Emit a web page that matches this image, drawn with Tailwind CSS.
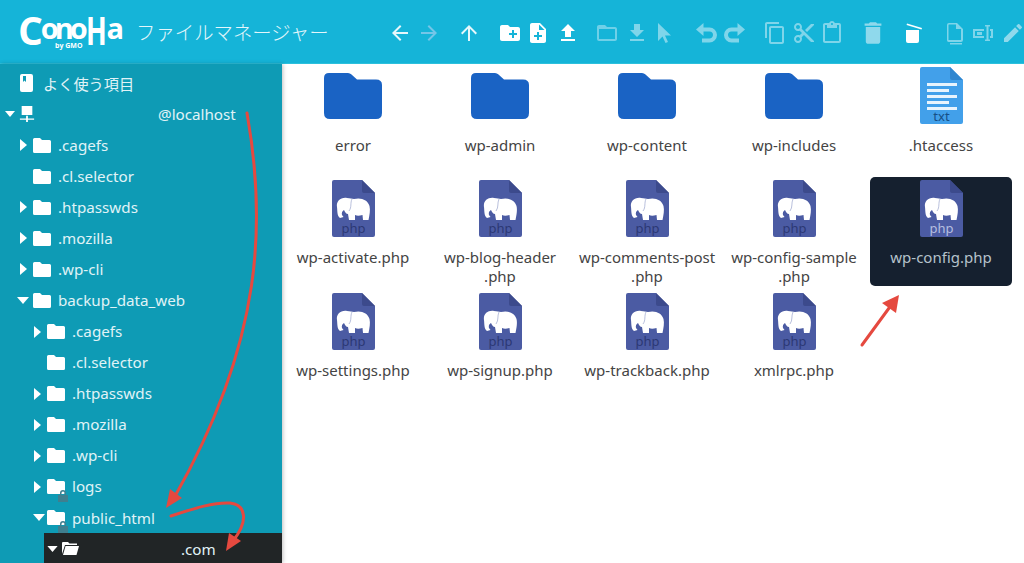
<!DOCTYPE html>
<html lang="ja">
<head>
  <meta charset="utf-8" />
  <title>ファイルマネージャー</title>
  <script src="https://cdn.jsdelivr.net/npm/@tailwindcss/browser@4"></script>
</head>
<body class="h-screen overflow-hidden bg-white font-['Noto_Sans','Noto_Sans_CJK_JP',sans-serif] text-[15px]">

  <!-- defs shared by the icons -->
  <svg class="hidden">
    <symbol id="folder" viewBox="0 0 18 15"><path d="M1.500 0H7l2 2h7.500A1.500 1.500 0 0 1 18 3.500V13.500A1.500 1.500 0 0 1 16.500 15H1.500A1.500 1.500 0 0 1 0 13.500V1.500A1.500 1.500 0 0 1 1.500 0z" fill="currentColor"/></symbol>
    <symbol id="right" viewBox="0 0 7 12"><path d="M0 0l7 6-7 6z" fill="currentColor"/></symbol>
    <symbol id="down" viewBox="0 0 12 7"><path d="M0 0h12L6 7z" fill="currentColor"/></symbol>
    <symbol id="bigfolder" viewBox="0 0 58 46"><path d="M5 0H24Q26 0 27.500 1.500L33 6.500H52Q58 6.500 58 12V40Q58 46 52 46H6Q0 46 0 40V5Q0 0 5 0z" fill="#1a63c4"/></symbol>
    <symbol id="elephant" viewBox="0 0 43 57">
      <path d="M5 27C4 21 9 17 15 18C18 18 20 19 22 19C29 17 36 20 37.500 26C38.500 30 37.500 35 36.500 40L31 40L30.500 35C27 36 25 36 23 35L23 40L17 40L16 34C14 34 13 32 12 30C10 31 9.500 33 10 35L11.500 37L8 38C5 36 5.500 31 5 27z" fill="#fff"/>
      <path d="M20 19C18 23 20 27 17 31" fill="none" stroke="#8a95c4" stroke-width=".6"/>
    </symbol>
  </svg>

  <header class="h-16 bg-[#15b4d8] border-b border-[#2cc0dc] flex items-center text-white">
    <div class="w-[136px] h-full shrink-0 relative font-['Open_Sans',sans-serif] font-bold leading-none">
      <div class="absolute left-[18px] top-[10px] flex items-start">
        <span class="text-[39px]">C</span>
        <span class="text-[29px] leading-[26px] tracking-[-4px] ml-[-2px] mt-[5px]">ono</span>
        <span class="text-[40px] ml-[2px] mr-[-10px] scale-x-[.68] origin-left">H</span>
        <span class="text-[29px] leading-[26px] mt-[5px]">a</span>
      </div>
      <span class="absolute left-[55px] top-[42px] text-[7px] font-bold leading-[7px]">by GMO</span>
    </div>
    <span class="w-[194px] shrink-0 whitespace-nowrap text-[19.400px] font-light font-['Noto_Sans_CJK_JP',sans-serif] text-[#e3f6fb] leading-none mt-[1px]">ファイルマネージャー</span>

    <div class="flex items-center shrink-0 ml-[58px] mt-[2px]">
      <svg class="w-6 h-6 fill-[#e6f7fb]" viewBox="0 0 24 24"><path d="M20 11H7.830l5.590-5.590L12 4l-8 8 8 8 1.410-1.410L7.830 13H20v-2z"/></svg>
      <svg class="w-6 h-6 ml-[5px] fill-[#74c6e8]" viewBox="0 0 24 24"><path d="M12 4l-1.410 1.410L16.170 11H4v2h12.170l-5.580 5.590L12 20l8-8z"/></svg>
      <svg class="w-6 h-6 ml-[16px] fill-[#e6f7fb]" viewBox="0 0 24 24"><path d="M4 12l1.410 1.410L11 7.830V20h2V7.830l5.580 5.590L20 12l-8-8-8 8z"/></svg>
      <svg class="w-6 h-6 ml-[17px] fill-white" viewBox="0 0 24 24"><path d="M20 6h-8l-2-2H4c-1.110 0-1.990.890-1.990 2L2 18c0 1.110.890 2 2 2h16c1.110 0 2-.890 2-2V8c0-1.110-.890-2-2-2zm-1 8h-3v3h-2v-3h-3v-2h3V9h2v3h3v2z"/></svg>
      <svg class="w-6 h-6 ml-[4px] fill-white" viewBox="0 0 24 24"><path d="M14 2H6c-1.100 0-1.990.900-1.990 2L4 20c0 1.100.890 2 1.990 2H18c1.100 0 2-.900 2-2V8l-6-6zm2 14h-3v3h-2v-3H8v-2h3v-3h2v3h3v2zm-3-7V3.500L18.500 9H13z"/></svg>
      <svg class="w-6 h-6 ml-[6px] fill-white" viewBox="0 0 24 24"><path d="M9 16h6v-6h4l-7-7-7 7h4zm-4 2h14v2H5z"/></svg>
      <svg class="w-6 h-6 ml-[15px] fill-[#6fd0e8]" viewBox="0 0 24 24"><path d="M20 6h-8l-2-2H4c-1.100 0-1.990.900-1.990 2L2 18c0 1.100.900 2 2 2h16c1.100 0 2-.900 2-2V8c0-1.100-.900-2-2-2zm0 12H4V8h16v10z"/></svg>
      <svg class="w-6 h-6 ml-[6px] fill-[#7fd5ea]" viewBox="0 0 24 24"><path d="M19 9h-4V3H9v6H5l7 7 7-7zM5 18v2h14v-2H5z"/></svg>
      <svg class="w-6 h-6 ml-[2px] fill-[#7fd5ea]" viewBox="0 0 24 24"><path d="M7 2v18l4.500-4.500 3 6.500 2.500-1-3-6.500h6z"/></svg>
      <svg class="w-6 h-6 ml-[19px] fill-[#7fd5ea]" viewBox="0 0 24 24"><path d="M6 8.500h9.500a5.500 5.500 0 0 1 0 11H8" fill="none" stroke="#7fd5ea" stroke-width="4"/><path d="M9.500 2L2 8.500l7.500 6.500z"/></svg>
      <svg class="w-6 h-6 ml-[5px] fill-[#7fd5ea]" viewBox="0 0 24 24"><path d="M18 8.500H8.500a5.500 5.500 0 0 0 0 11H16" fill="none" stroke="#7fd5ea" stroke-width="4"/><path d="M14.500 2L22 8.500 14.500 15z"/></svg>
      <svg class="w-6 h-6 ml-[16px] fill-[#7fd5ea]" viewBox="0 0 24 24"><path d="M16 1H4c-1.100 0-2 .900-2 2v14h2V3h12V1zm3 4H8c-1.100 0-2 .900-2 2v14c0 1.100.900 2 2 2h11c1.100 0 2-.900 2-2V7c0-1.100-.900-2-2-2zm0 16H8V7h11v14z"/></svg>
      <svg class="w-6 h-6 ml-[5px] fill-[#7fd5ea]" viewBox="0 0 24 24"><path d="M9.640 7.640c.230-.500.360-1.050.360-1.640 0-2.210-1.790-4-4-4S2 3.790 2 6s1.790 4 4 4c.590 0 1.140-.130 1.640-.360L10 12l-2.360 2.360C7.140 14.130 6.590 14 6 14c-2.210 0-4 1.790-4 4s1.790 4 4 4 4-1.790 4-4c0-.590-.130-1.140-.360-1.640L12 14l7 7h3v-1L9.640 7.640zM6 8c-1.100 0-2-.890-2-2s.900-2 2-2 2 .890 2 2-.900 2-2 2zm0 12c-1.100 0-2-.890-2-2s.900-2 2-2 2 .890 2 2-.900 2-2 2zM19 3l-6 6 2 2 7-7V3z"/></svg>
      <svg class="w-6 h-6 ml-[4px] fill-[#7fd5ea]" viewBox="0 0 24 24"><path d="M19 2h-4.180C14.400.840 13.300 0 12 0c-1.300 0-2.400.840-2.820 2H5c-1.100 0-2 .900-2 2v16c0 1.100.900 2 2 2h14c1.100 0 2-.900 2-2V4c0-1.100-.900-2-2-2zm-7 0c.550 0 1 .450 1 1s-.450 1-1 1-1-.450-1-1 .450-1 1-1zm7 18H5V4h2v3h10V4h2v16z"/></svg>
      <svg class="w-6 h-6 ml-[17px] fill-[#8fd9ec]" viewBox="2 2 20 20"><path d="M6 19c0 1.100.900 2 2 2h8c1.100 0 2-.900 2-2V7H6v12zM19 4h-3.500l-1-1h-5l-1 1H5v2h14V4z"/></svg>
      <svg class="w-6 h-6 ml-[16px] fill-white" viewBox="0 0 24 24"><path d="M5 9h13v11a2 2 0 0 1-2 2H7a2 2 0 0 1-2-2V12z"/><path d="M6 2.500l15 4.500-.5 1.500L5.600 4z"/></svg>
      <svg class="w-6 h-6 ml-[18px] fill-[#7fd5ea]" viewBox="0 0 24 24"><path d="M14 2H6a2 2 0 0 0-2 2v15h1.500V4A.5.500 0 0 1 6 3.500h7V8h5v10.500A.5.500 0 0 1 17.500 19H4v.5A2 2 0 0 0 6 21h12a2 2 0 0 0 2-2V8z"/><path d="M7 22h12v1.500H7z"/></svg>
      <svg class="w-6 h-6 ml-[4px] fill-[#7fd5ea]" viewBox="0 0 24 24"><path d="M2 8h11v2H4v5h9v2H2zM19 8h3v9h-3v-2h1v-5h-1zM14 4h5v1.500h-1.500v13H19V20h-5v-1.500h1.500v-13H14z"/><path d="M6 11h5v3H6z"/></svg>
      <svg class="w-6 h-6 ml-[6px] fill-[#8fd9ec]" viewBox="0 0 24 24"><path d="M3 17.250V21h3.750L17.810 9.940l-3.750-3.750L3 17.250zM20.710 7.040c.390-.390.390-1.020 0-1.410l-2.340-2.340c-.390-.390-1.020-.390-1.410 0l-1.830 1.830 3.750 3.750 1.830-1.830z"/></svg>
    </div>
  </header>

  <div class="flex h-[499px]">
    <!-- tree -->
    <nav class="w-[282px] shrink-0 bg-[#0e9bb5] text-[#e0f3f7] text-[15.200px] pt-[3.500px] overflow-hidden shadow-[1px_0_4px_rgba(0,0,0,0.25)]">
      <div class="flex items-center h-[31.070px] pl-[20px]">
        <svg class="w-[13px] h-[18px]" viewBox="0 0 13 18"><path d="M2 0h9a2 2 0 0 1 2 2v14a2 2 0 0 1-2 2H2a2 2 0 0 1-2-2V2a2 2 0 0 1 2-2z" fill="#fff"/><path d="M3 2h3v6L4.500 6.500 3 8z" fill="#0e9bb5"/></svg>
        <span class="ml-[10px] font-['Noto_Sans_CJK_JP',sans-serif]">よく使う項目</span>
      </div>
      <div class="flex items-center h-[31.070px] pl-[5px]">
        <svg class="w-[10px] h-[6px] text-white"><use href="#down"/></svg>
        <svg class="w-[16px] h-[16px] ml-[4px] fill-white" viewBox="0 0 18 18"><path d="M3 0h12v10H3zM8 11h2v3h7v1.500H10V18H8v-2.500H1V14h7z"/></svg>
        <span class="ml-[123px]">@localhost</span>
      </div>
      <div class="flex items-center h-[31.070px] pl-[20px]"><svg class="w-[7px] h-3 text-white"><use href="#right"/></svg><svg class="w-[18px] h-[15px] ml-[6px] text-white"><use href="#folder"/></svg><span class="ml-[7px]">.cagefs</span></div>
      <div class="flex items-center h-[31.070px] pl-[33px]"><svg class="w-[18px] h-[15px] text-white"><use href="#folder"/></svg><span class="ml-[7px]">.cl.selector</span></div>
      <div class="flex items-center h-[31.070px] pl-[20px]"><svg class="w-[7px] h-3 text-white"><use href="#right"/></svg><svg class="w-[18px] h-[15px] ml-[6px] text-white"><use href="#folder"/></svg><span class="ml-[7px]">.htpasswds</span></div>
      <div class="flex items-center h-[31.070px] pl-[20px]"><svg class="w-[7px] h-3 text-white"><use href="#right"/></svg><svg class="w-[18px] h-[15px] ml-[6px] text-white"><use href="#folder"/></svg><span class="ml-[7px]">.mozilla</span></div>
      <div class="flex items-center h-[31.070px] pl-[20px]"><svg class="w-[7px] h-3 text-white"><use href="#right"/></svg><svg class="w-[18px] h-[15px] ml-[6px] text-white"><use href="#folder"/></svg><span class="ml-[7px]">.wp-cli</span></div>
      <div class="flex items-center h-[31.070px] pl-[17px]"><svg class="w-3 h-[7px] text-white"><use href="#down"/></svg><svg class="w-[18px] h-[15px] ml-[4px] text-white"><use href="#folder"/></svg><span class="ml-[7px]">backup_data_web</span></div>
      <div class="flex items-center h-[31.070px] pl-[34px]"><svg class="w-[7px] h-3 text-white"><use href="#right"/></svg><svg class="w-[18px] h-[15px] ml-[6px] text-white"><use href="#folder"/></svg><span class="ml-[7px]">.cagefs</span></div>
      <div class="flex items-center h-[31.070px] pl-[47px]"><svg class="w-[18px] h-[15px] text-white"><use href="#folder"/></svg><span class="ml-[7px]">.cl.selector</span></div>
      <div class="flex items-center h-[31.070px] pl-[34px]"><svg class="w-[7px] h-3 text-white"><use href="#right"/></svg><svg class="w-[18px] h-[15px] ml-[6px] text-white"><use href="#folder"/></svg><span class="ml-[7px]">.htpasswds</span></div>
      <div class="flex items-center h-[31.070px] pl-[34px]"><svg class="w-[7px] h-3 text-white"><use href="#right"/></svg><svg class="w-[18px] h-[15px] ml-[6px] text-white"><use href="#folder"/></svg><span class="ml-[7px]">.mozilla</span></div>
      <div class="flex items-center h-[31.070px] pl-[34px]"><svg class="w-[7px] h-3 text-white"><use href="#right"/></svg><svg class="w-[18px] h-[15px] ml-[6px] text-white"><use href="#folder"/></svg><span class="ml-[7px]">.wp-cli</span></div>
      <div class="flex items-center h-[31.070px] pl-[34px]"><svg class="w-[7px] h-3 text-white"><use href="#right"/></svg>
        <span class="relative ml-[6px] flex"><svg class="w-[18px] h-[15px] text-white"><use href="#folder"/></svg>
          <svg class="absolute left-[11px] top-[11px] w-[10px] h-[12px] fill-[#3f7f8f]" viewBox="0 0 10 12"><path d="M2 5V3a3 3 0 0 1 6 0v2h2v7H0V5zM3.500 5h3V3a1.500 1.500 0 0 0-3 0z"/></svg></span>
        <span class="ml-[7px]">logs</span></div>
      <div class="flex items-center h-[31.070px] pl-[33px]"><svg class="w-3 h-[7px] text-white"><use href="#down"/></svg>
        <span class="relative ml-[2px] flex"><svg class="w-[18px] h-[15px] text-white"><use href="#folder"/></svg>
          <svg class="absolute left-[11px] top-[11px] w-[10px] h-[12px] fill-[#3f7f8f]" viewBox="0 0 10 12"><path d="M2 5V3a3 3 0 0 1 6 0v2h2v7H0V5zM3.500 5h3V3a1.500 1.500 0 0 0-3 0z"/></svg></span>
        <span class="ml-[7px]">public_html</span></div>
      <div class="flex items-center h-[31.070px] ml-[44px] pl-[3px] bg-[#212526]">
        <svg class="w-[11px] h-[6px] text-white"><use href="#down"/></svg>
        <svg class="w-[17px] h-[13px] ml-[4px] fill-white" viewBox="0 0 17 13"><path d="M1 0h5l1.500 1.500H15V3H3L0 12V1a1 1 0 0 1 1-1z"/><path d="M3.500 4H17l-2.500 9H1z"/></svg>
        <span class="ml-[102px]">.com</span>
      </div>
    </nav>

    <!-- files -->
    <main class="flex-1 grid grid-cols-[repeat(5,142px)] auto-rows-[109px] gap-x-[5px] gap-y-[4px] content-start text-[#444]">
      <div class="flex flex-col items-center pt-[3px]"><svg class="w-[58px] h-[46px] mt-[6px] mb-[5px]"><use href="#bigfolder"/></svg><p class="mt-[12px] leading-[18.500px] text-center">error</p></div>
      <div class="flex flex-col items-center pt-[3px]"><svg class="w-[58px] h-[46px] mt-[6px] mb-[5px]"><use href="#bigfolder"/></svg><p class="mt-[12px] leading-[18.500px] text-center">wp-admin</p></div>
      <div class="flex flex-col items-center pt-[3px]"><svg class="w-[58px] h-[46px] mt-[6px] mb-[5px]"><use href="#bigfolder"/></svg><p class="mt-[12px] leading-[18.500px] text-center">wp-content</p></div>
      <div class="flex flex-col items-center pt-[3px]"><svg class="w-[58px] h-[46px] mt-[6px] mb-[5px]"><use href="#bigfolder"/></svg><p class="mt-[12px] leading-[18.500px] text-center">wp-includes</p></div>
      <div class="flex flex-col items-center pt-[3px]">
        <svg class="w-[43px] h-[57px]" viewBox="0 0 43 57"><path d="M2 0H30L43 13V55a2 2 0 0 1-2 2H2a2 2 0 0 1-2-2V2a2 2 0 0 1 2-2z" fill="#42a0ea"/><path d="M30 0L43 13H32a2 2 0 0 1-2-2z" fill="#2f86d0"/><path d="M7 16h30v3H7zM7 22h22v3H7zM7 28h30v3H7zM7 34h22v3H7zM7 40h30v3H7z" fill="#e8f4fd"/><text x="21.500" y="54" text-anchor="middle" font-size="13" fill="#174f86">txt</text></svg>
        <p class="mt-[12px] leading-[18.500px] text-center">.htaccess</p>
      </div>

      <div class="flex flex-col items-center pt-[3px]">
        <svg class="w-[43px] h-[57px]" viewBox="0 0 43 57"><path d="M2 0H30L43 13V55a2 2 0 0 1-2 2H2a2 2 0 0 1-2-2V2a2 2 0 0 1 2-2z" fill="#4b5ba3"/><path d="M30 0L43 13H32a2 2 0 0 1-2-2z" fill="#3c4a8c"/><use href="#elephant"/><text x="21.500" y="53" text-anchor="middle" font-size="13" fill="#2c3874">php</text></svg>
        <p class="mt-[11px] leading-[18.500px] text-center">wp-activate.php</p>
      </div>
      <div class="flex flex-col items-center pt-[3px]">
        <svg class="w-[43px] h-[57px]" viewBox="0 0 43 57"><path d="M2 0H30L43 13V55a2 2 0 0 1-2 2H2a2 2 0 0 1-2-2V2a2 2 0 0 1 2-2z" fill="#4b5ba3"/><path d="M30 0L43 13H32a2 2 0 0 1-2-2z" fill="#3c4a8c"/><use href="#elephant"/><text x="21.500" y="53" text-anchor="middle" font-size="13" fill="#2c3874">php</text></svg>
        <p class="mt-[11px] leading-[18.500px] text-center">wp-blog-header<br />.php</p>
      </div>
      <div class="flex flex-col items-center pt-[3px]">
        <svg class="w-[43px] h-[57px]" viewBox="0 0 43 57"><path d="M2 0H30L43 13V55a2 2 0 0 1-2 2H2a2 2 0 0 1-2-2V2a2 2 0 0 1 2-2z" fill="#4b5ba3"/><path d="M30 0L43 13H32a2 2 0 0 1-2-2z" fill="#3c4a8c"/><use href="#elephant"/><text x="21.500" y="53" text-anchor="middle" font-size="13" fill="#2c3874">php</text></svg>
        <p class="mt-[11px] leading-[18.500px] text-center">wp-comments-post<br />.php</p>
      </div>
      <div class="flex flex-col items-center pt-[3px]">
        <svg class="w-[43px] h-[57px]" viewBox="0 0 43 57"><path d="M2 0H30L43 13V55a2 2 0 0 1-2 2H2a2 2 0 0 1-2-2V2a2 2 0 0 1 2-2z" fill="#4b5ba3"/><path d="M30 0L43 13H32a2 2 0 0 1-2-2z" fill="#3c4a8c"/><use href="#elephant"/><text x="21.500" y="53" text-anchor="middle" font-size="13" fill="#2c3874">php</text></svg>
        <p class="mt-[11px] leading-[18.500px] text-center">wp-config-sample<br />.php</p>
      </div>
      <div class="flex flex-col items-center pt-[3px] bg-[#15202f] rounded-[5px] text-[#b5c2cb]">
        <svg class="w-[43px] h-[57px]" viewBox="0 0 43 57"><path d="M2 0H30L43 13V55a2 2 0 0 1-2 2H2a2 2 0 0 1-2-2V2a2 2 0 0 1 2-2z" fill="#4b5ba3"/><path d="M30 0L43 13H32a2 2 0 0 1-2-2z" fill="#3c4a8c"/><use href="#elephant"/><text x="21.500" y="53" text-anchor="middle" font-size="13" fill="#b5bfe0">php</text></svg>
        <p class="mt-[11px] leading-[18.500px] text-center">wp-config.php</p>
      </div>

      <div class="flex flex-col items-center pt-[3px]">
        <svg class="w-[43px] h-[57px]" viewBox="0 0 43 57"><path d="M2 0H30L43 13V55a2 2 0 0 1-2 2H2a2 2 0 0 1-2-2V2a2 2 0 0 1 2-2z" fill="#4b5ba3"/><path d="M30 0L43 13H32a2 2 0 0 1-2-2z" fill="#3c4a8c"/><use href="#elephant"/><text x="21.500" y="53" text-anchor="middle" font-size="13" fill="#2c3874">php</text></svg>
        <p class="mt-[11px] leading-[18.500px] text-center">wp-settings.php</p>
      </div>
      <div class="flex flex-col items-center pt-[3px]">
        <svg class="w-[43px] h-[57px]" viewBox="0 0 43 57"><path d="M2 0H30L43 13V55a2 2 0 0 1-2 2H2a2 2 0 0 1-2-2V2a2 2 0 0 1 2-2z" fill="#4b5ba3"/><path d="M30 0L43 13H32a2 2 0 0 1-2-2z" fill="#3c4a8c"/><use href="#elephant"/><text x="21.500" y="53" text-anchor="middle" font-size="13" fill="#2c3874">php</text></svg>
        <p class="mt-[11px] leading-[18.500px] text-center">wp-signup.php</p>
      </div>
      <div class="flex flex-col items-center pt-[3px]">
        <svg class="w-[43px] h-[57px]" viewBox="0 0 43 57"><path d="M2 0H30L43 13V55a2 2 0 0 1-2 2H2a2 2 0 0 1-2-2V2a2 2 0 0 1 2-2z" fill="#4b5ba3"/><path d="M30 0L43 13H32a2 2 0 0 1-2-2z" fill="#3c4a8c"/><use href="#elephant"/><text x="21.500" y="53" text-anchor="middle" font-size="13" fill="#2c3874">php</text></svg>
        <p class="mt-[11px] leading-[18.500px] text-center">wp-trackback.php</p>
      </div>
      <div class="flex flex-col items-center pt-[3px]">
        <svg class="w-[43px] h-[57px]" viewBox="0 0 43 57"><path d="M2 0H30L43 13V55a2 2 0 0 1-2 2H2a2 2 0 0 1-2-2V2a2 2 0 0 1 2-2z" fill="#4b5ba3"/><path d="M30 0L43 13H32a2 2 0 0 1-2-2z" fill="#3c4a8c"/><use href="#elephant"/><text x="21.500" y="53" text-anchor="middle" font-size="13" fill="#2c3874">php</text></svg>
        <p class="mt-[11px] leading-[18.500px] text-center">xmlrpc.php</p>
      </div>
    </main>
  </div>

  <!-- red annotation arrows on top of the screenshot -->
  <svg class="absolute left-0 top-0 w-[1024px] h-[563px] pointer-events-none" viewBox="0 0 1024 563">
    <g fill="none" stroke="#e5493f" stroke-width="3" stroke-linecap="round">
      <path d="M247 113C266 220 264 340 174 498"/>
      <path d="M171 516C195 508 215 502 230 503C247 505 248 522 233 541"/>
      <path d="M862 345L892 304"/>
    </g>
    <g fill="#e5493f">
      <path d="M166 508L170 489L182 498z"/>
      <path d="M226 551L229 533L241 541z"/>
      <path d="M899 295L896 313L882 303z"/>
    </g>
  </svg>
</body>
</html>
